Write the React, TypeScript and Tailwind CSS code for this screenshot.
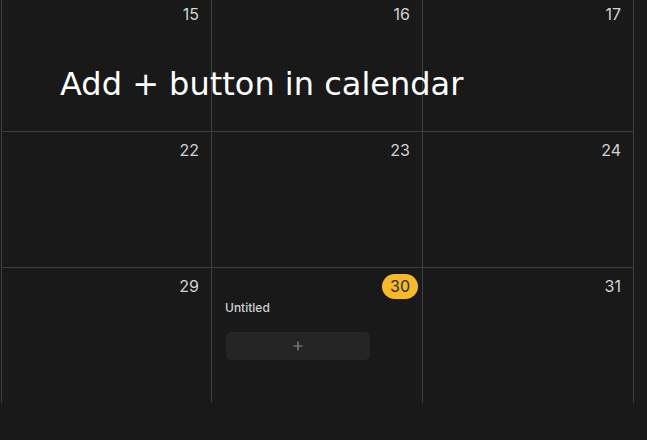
import React from "react";

type Day = { n: number; today?: boolean; items?: string[] };

const weeks: Day[][] = [
  [{ n: 15 }, { n: 16 }, { n: 17 }],
  [{ n: 22 }, { n: 23 }, { n: 24 }],
  [{ n: 29 }, { n: 30, today: true, items: ["Untitled"] }, { n: 31 }],
];

function DayCell({ day, last }: { day: Day; last: boolean }) {
  return (
    <div
      className={`h-[136px] border-l border-t border-[#3f3f3f] flex flex-col ${
        last ? "border-r" : ""
      }`}
    >
      <div className="flex justify-end pt-[6px] pr-[4px]">
        {day.today ? (
          <span className="h-[25px] px-[8px] rounded-full bg-[#f7b928] text-[#2b2b2b] text-[16px] leading-[25px]">
            {day.n}
          </span>
        ) : (
          <span className="h-[25px] px-[8px] text-[#d4d4d4] text-[16px] leading-[25px]">
            {day.n}
          </span>
        )}
      </div>
      {day.items && (
        <div className="flex flex-col pl-[13px] pt-[1px]">
          {day.items.map((t) => (
            <div key={t} className="text-[12px] leading-[16px] text-[#d2d2d2] font-medium">
              {t}
            </div>
          ))}
          <button className="mt-[16px] ml-[1px] w-36 h-[28px] rounded-[5px] bg-[#252525] text-[#8c8c8c] flex items-center justify-center">
            <svg width="10" height="10" viewBox="0 0 10 10">
              <path d="M5 0.5v9M0.5 5h9" stroke="#8c8c8c" strokeWidth="1.2" />
            </svg>
          </button>
        </div>
      )}
    </div>
  );
}

export default function App() {
  return (
    <div
      className="relative w-[647px] h-[440px] bg-[#191919] overflow-hidden"
      style={{ fontFamily: "Inter, 'Noto Sans', sans-serif" }}
    >
      <div className="h-[402px] overflow-hidden">
        <div className="-mt-[5px] ml-[1px] grid grid-cols-[210px_211px_212px]">
          {weeks.map((w, wi) =>
            w.map((d, di) => (
              <DayCell key={`${wi}-${di}`} day={d} last={di === w.length - 1} />
            ))
          )}
        </div>
      </div>
      <div
        className="absolute left-[60px] top-[64px] text-white text-[32px] leading-[40px] whitespace-nowrap"
        style={{ fontFamily: "'DejaVu Sans', sans-serif" }}
      >
        Add + button in calendar
      </div>
    </div>
  );
}
